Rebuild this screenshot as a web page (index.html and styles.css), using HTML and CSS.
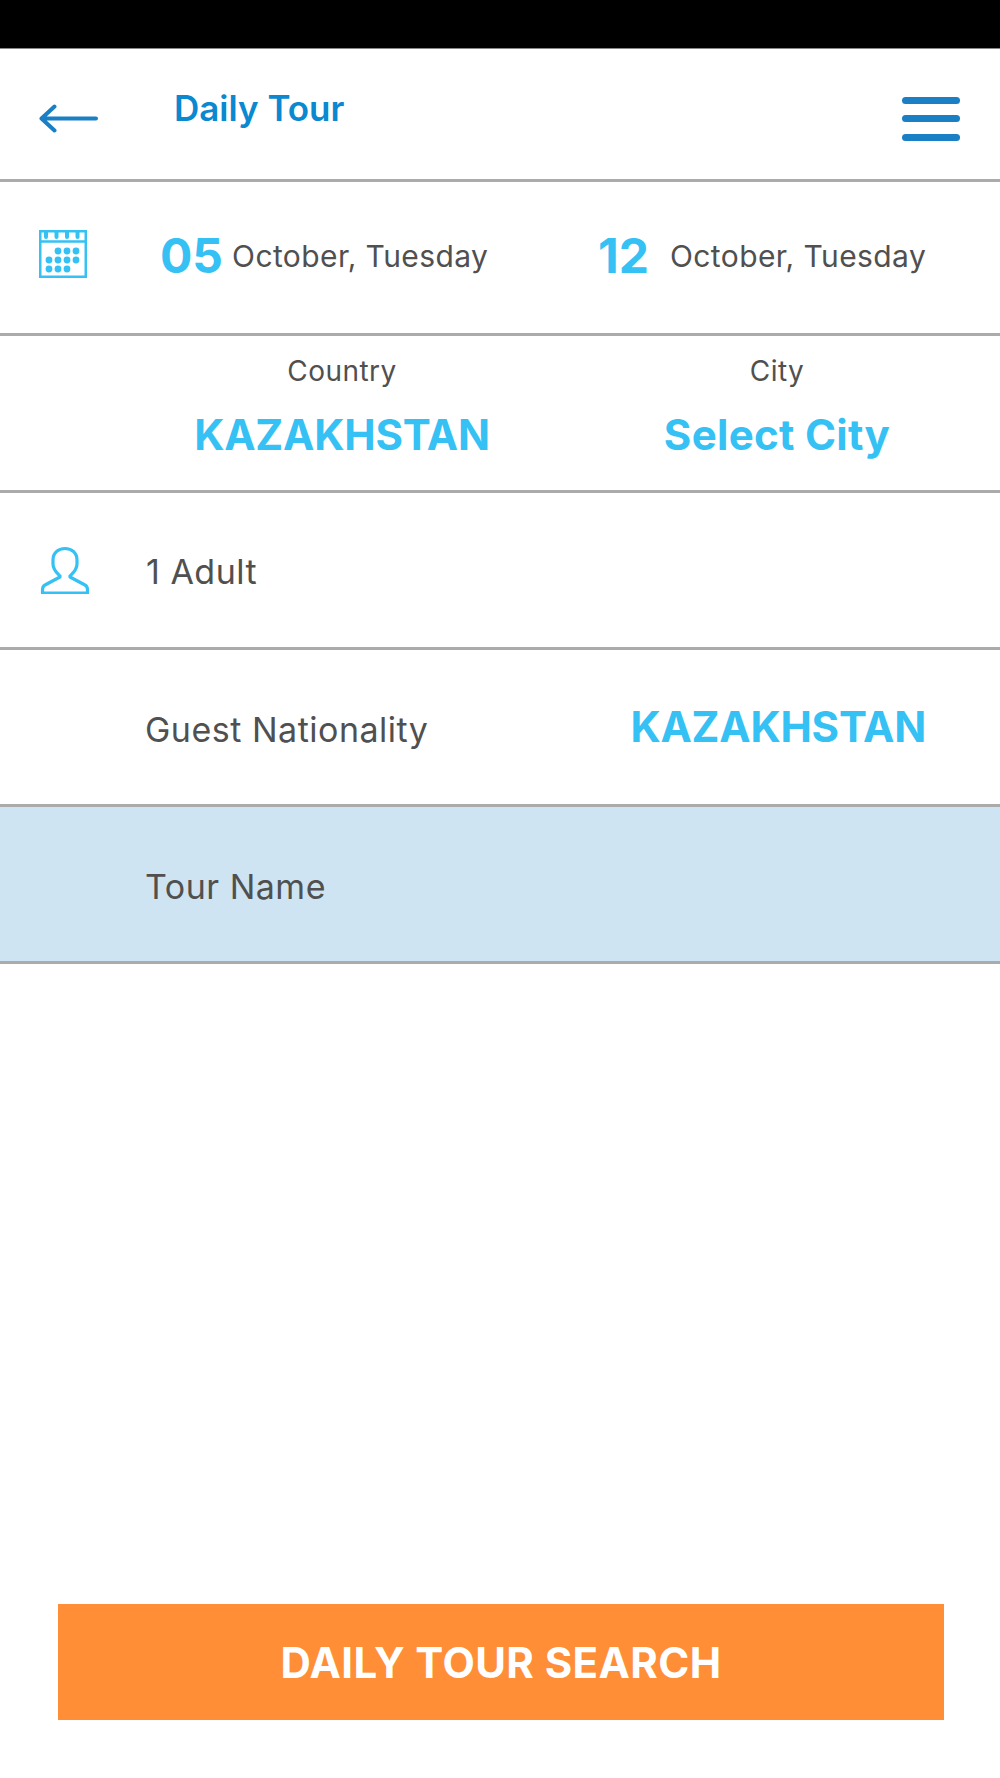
FILE: index.html
```html
<!DOCTYPE html>
<html lang="en">
<head>
<meta charset="utf-8">
<title>Daily Tour</title>
<link rel="stylesheet" href="styles.css">
</head>
<body>
<div class="page">
  <div class="statusbar"></div>
  <header class="row header">
    <svg class="back" width="60" height="30" viewBox="0 0 60 30"><path d="M57 14.500H3M15.500 2.500L2.500 14.500L15.500 26.500" fill="none" stroke="#1a7fc4" stroke-width="4" stroke-linecap="round" stroke-linejoin="round"/></svg>
    <h1 class="title">Daily Tour</h1>
    <div class="menu"><span></span><span></span><span></span></div>
  </header>
  <section class="row dates">
    <svg class="cal" width="48" height="48" viewBox="0 0 48 48">
      <rect x="1.250" y="1.250" width="45.500" height="45.500" fill="none" stroke="#35c1f4" stroke-width="2.500"/>
      <path d="M1 11.500H47" stroke="#35c1f4" stroke-width="2.500"/>
      <path d="M7 1V7M17.500 1V7M28 1V7M38.500 1V7" stroke="#35c1f4" stroke-width="4" stroke-linecap="round"/>
      <g fill="#35c1f4">
        <circle cx="19" cy="21" r="3.400"/><circle cx="28" cy="21" r="3.400"/><circle cx="37" cy="21" r="3.400"/>
        <circle cx="10" cy="30" r="3.400"/><circle cx="19" cy="30" r="3.400"/><circle cx="28" cy="30" r="3.400"/><circle cx="37" cy="30" r="3.400"/>
        <circle cx="10" cy="39" r="3.400"/><circle cx="19" cy="39" r="3.400"/><circle cx="28" cy="39" r="3.400"/>
      </g>
    </svg>
    <div class="date"><span class="day">05</span><span class="month">October, Tuesday</span></div>
    <div class="date second"><span class="day">12</span><span class="month">October, Tuesday</span></div>
  </section>
  <section class="row places">
    <div class="place"><span class="small">Country</span><span class="value">KAZAKHSTAN</span></div>
    <div class="place"><span class="small">City</span><span class="value city-value">Select City</span></div>
  </section>
  <section class="row guests">
    <svg class="person" width="50" height="48" viewBox="0 0 50 48"><path d="M25 2.500C18 2.500 13 7 13 14V18C13 24 17 27 20 30V31L5 39C3 40 2.500 42 2.500 44V47H47.500V44C47.500 42 47 40 45 39L30 31V30C33 27 37 24 37 18V14C37 7 32 2.500 25 2.500Z" fill="none" stroke="#35c1f4" stroke-width="3.200" stroke-linejoin="round"/></svg>
    <span class="label">1 Adult</span>
  </section>
  <section class="row nation">
    <span class="label">Guest Nationality</span>
    <span class="value">KAZAKHSTAN</span>
  </section>
  <section class="row tour">
    <span class="label">Tour Name</span>
  </section>
  <div class="spacer"></div>
  <button class="search" type="button">DAILY TOUR SEARCH</button>
</div>
</body>
</html>
```

FILE: styles.css
```css
* { box-sizing: border-box; }
html, body { margin: 0; padding: 0; background: #fff; }
body { font-family: Inter, "Liberation Sans", sans-serif; color: #505050; }
.page { width: 1000px; height: 1778px; display: flex; flex-direction: column; overflow: hidden; }
.statusbar { height: 49px; background: #000; border-bottom: 1px solid #888; flex: none; }
.row { height: 157px; flex: none; display: flex; align-items: center; border-bottom: 3px solid #ababab; }
.header { height: 133px; padding: 0 40px 0 39px; }
.back { margin-top: 10px; flex: none; }
.title { margin: -12px 0 0 75px; font-size: 35px; font-weight: 600; color: #0a88d0; flex: 1; }
.menu { width: 58px; display: flex; flex-direction: column; gap: 11.500px; margin-top: 9px; }
.menu span { height: 7px; border-radius: 3.500px; background: #1a7fc4; }
.dates { height: 154px; padding-left: 39px; }
.cal { flex: none; margin-right: 73px; margin-top: -7px; }
.date { display: flex; align-items: center; width: 438px; margin-top: -4px; flex: none; }
.second { width: auto; }
.second .month { margin-left: 21px; }
.day { font-size: 48px; font-weight: 700; color: #35c1f4; }
.month { font-size: 30px; letter-spacing: 0.400px; margin-left: 9px; }
.places { padding-left: 130px; display: grid; grid-template-columns: 424px 446px; align-items: start; padding-top: 17px; }
.place { display: flex; flex-direction: column; align-items: center; }
.small { font-size: 28px; letter-spacing: 0.450px; line-height: 36px; }
.value { font-size: 42px; font-weight: 700; color: #35c1f4; line-height: 52px; letter-spacing: -0.200px; }
.city-value { letter-spacing: 0.300px; }
.place .value { margin-top: 20px; }
.label { font-size: 34px; letter-spacing: 0.500px; margin-top: 4px; }
.guests { padding-left: 40px; }
.guests .label { margin-top: 2px; }
.person { flex: none; margin-right: 56px; }
.nation { padding: 0 74px 0 145px; justify-content: space-between; }
.tour { padding-left: 145px; background: #cfe4f2; }
.spacer { height: 640px; flex: none; }
.search { width: 886px; height: 116px; margin-left: 58px; flex: none; border: 0; background: #ff8e36; color: #fff; font-family: inherit; font-size: 42px; font-weight: 700; letter-spacing: 0.400px; padding: 0; }
```
